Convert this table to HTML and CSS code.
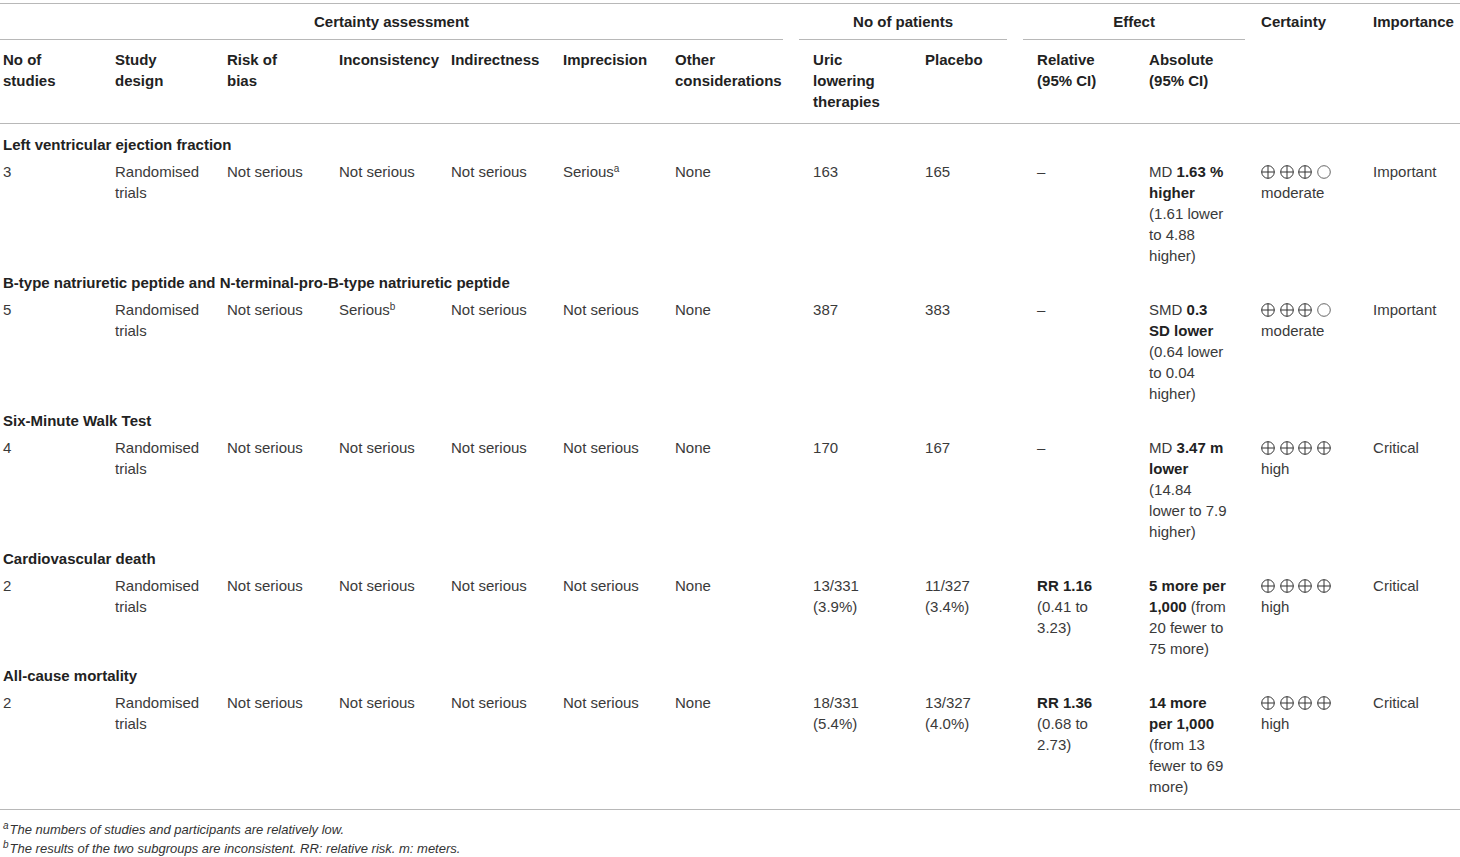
FILE: index.html
```html
<!DOCTYPE html>
<html lang="en">
<head>
  <meta charset="UTF-8" />
  <meta name="viewport" content="width=device-width, initial-scale=1.0"/>
  <title>GRADE evidence profile</title>
  <link rel="stylesheet" href="styles.css">
</head>
<body>
  <div class="table-wrap">
    <table class="grade">
      <colgroup>
        <col class="w112"><col class="w112"><col class="w112"><col class="w112"><col class="w112"><col class="w112">
        <col class="w138">
        <col class="w112"><col class="w112"><col class="w112"><col class="w112"><col class="w112">
        <col class="w90">
      </colgroup>
      <thead>
        <tr class="groups">
          <th colspan="7"><div class="group g-assess">Certainty assessment</div></th>
          <th colspan="2"><div class="group g-patients">No of patients</div></th>
          <th colspan="2"><div class="group g-effect">Effect</div></th>
          <th rowspan="2" class="solo">Certainty</th>
          <th rowspan="2" class="solo">Importance</th>
        </tr>
        <tr class="cols">
          <th>No of<br>studies</th>
          <th>Study<br>design</th>
          <th>Risk of<br>bias</th>
          <th>Inconsistency</th>
          <th>Indirectness</th>
          <th>Imprecision</th>
          <th>Other<br>considerations</th>
          <th>Uric<br>lowering<br>therapies</th>
          <th>Placebo</th>
          <th>Relative<br>(95% CI)</th>
          <th>Absolute<br>(95% CI)</th>
        </tr>
      </thead>
      <tbody>
        <tr class="section first">
          <td colspan="13">Left ventricular ejection fraction</td>
        </tr>
        <tr>
          <td>3</td>
          <td>Randomised<br>trials</td>
          <td>Not serious</td>
          <td>Not serious</td>
          <td>Not serious</td>
          <td>Serious<sup>a</sup></td>
          <td>None</td>
          <td>163</td>
          <td>165</td>
          <td>–</td>
          <td>MD <b>1.63 %<br>higher</b><br>(1.61 lower<br>to 4.88<br>higher)</td>
          <td>
            <div class="dots">
              <svg viewBox="0 0 14 14"><circle cx="7" cy="7" r="6.3"/><path d="M0.7 7h12.6M7 0.7v12.6"/></svg>
              <svg viewBox="0 0 14 14"><circle cx="7" cy="7" r="6.3"/><path d="M0.7 7h12.6M7 0.7v12.6"/></svg>
              <svg viewBox="0 0 14 14"><circle cx="7" cy="7" r="6.3"/><path d="M0.7 7h12.6M7 0.7v12.6"/></svg>
              <svg class="empty" viewBox="0 0 14 14"><circle cx="7" cy="7" r="6.3"/></svg>
            </div>
            moderate
          </td>
          <td>Important</td>
        </tr>

        <tr class="section">
          <td colspan="13">B-type natriuretic peptide and N-terminal-pro-B-type natriuretic peptide</td>
        </tr>
        <tr>
          <td>5</td>
          <td>Randomised<br>trials</td>
          <td>Not serious</td>
          <td>Serious<sup>b</sup></td>
          <td>Not serious</td>
          <td>Not serious</td>
          <td>None</td>
          <td>387</td>
          <td>383</td>
          <td>–</td>
          <td>SMD <b>0.3<br>SD lower</b><br>(0.64 lower<br>to 0.04<br>higher)</td>
          <td>
            <div class="dots">
              <svg viewBox="0 0 14 14"><circle cx="7" cy="7" r="6.3"/><path d="M0.7 7h12.6M7 0.7v12.6"/></svg>
              <svg viewBox="0 0 14 14"><circle cx="7" cy="7" r="6.3"/><path d="M0.7 7h12.6M7 0.7v12.6"/></svg>
              <svg viewBox="0 0 14 14"><circle cx="7" cy="7" r="6.3"/><path d="M0.7 7h12.6M7 0.7v12.6"/></svg>
              <svg class="empty" viewBox="0 0 14 14"><circle cx="7" cy="7" r="6.3"/></svg>
            </div>
            moderate
          </td>
          <td>Important</td>
        </tr>

        <tr class="section">
          <td colspan="13">Six-Minute Walk Test</td>
        </tr>
        <tr>
          <td>4</td>
          <td>Randomised<br>trials</td>
          <td>Not serious</td>
          <td>Not serious</td>
          <td>Not serious</td>
          <td>Not serious</td>
          <td>None</td>
          <td>170</td>
          <td>167</td>
          <td>–</td>
          <td>MD <b>3.47 m<br>lower</b><br>(14.84<br>lower to 7.9<br>higher)</td>
          <td>
            <div class="dots">
              <svg viewBox="0 0 14 14"><circle cx="7" cy="7" r="6.3"/><path d="M0.7 7h12.6M7 0.7v12.6"/></svg>
              <svg viewBox="0 0 14 14"><circle cx="7" cy="7" r="6.3"/><path d="M0.7 7h12.6M7 0.7v12.6"/></svg>
              <svg viewBox="0 0 14 14"><circle cx="7" cy="7" r="6.3"/><path d="M0.7 7h12.6M7 0.7v12.6"/></svg>
              <svg viewBox="0 0 14 14"><circle cx="7" cy="7" r="6.3"/><path d="M0.7 7h12.6M7 0.7v12.6"/></svg>
            </div>
            high
          </td>
          <td>Critical</td>
        </tr>

        <tr class="section">
          <td colspan="13">Cardiovascular death</td>
        </tr>
        <tr>
          <td>2</td>
          <td>Randomised<br>trials</td>
          <td>Not serious</td>
          <td>Not serious</td>
          <td>Not serious</td>
          <td>Not serious</td>
          <td>None</td>
          <td>13/331<br>(3.9%)</td>
          <td>11/327<br>(3.4%)</td>
          <td><b>RR 1.16</b><br>(0.41 to<br>3.23)</td>
          <td><b>5 more per<br>1,000</b> (from<br>20 fewer to<br>75 more)</td>
          <td>
            <div class="dots">
              <svg viewBox="0 0 14 14"><circle cx="7" cy="7" r="6.3"/><path d="M0.7 7h12.6M7 0.7v12.6"/></svg>
              <svg viewBox="0 0 14 14"><circle cx="7" cy="7" r="6.3"/><path d="M0.7 7h12.6M7 0.7v12.6"/></svg>
              <svg viewBox="0 0 14 14"><circle cx="7" cy="7" r="6.3"/><path d="M0.7 7h12.6M7 0.7v12.6"/></svg>
              <svg viewBox="0 0 14 14"><circle cx="7" cy="7" r="6.3"/><path d="M0.7 7h12.6M7 0.7v12.6"/></svg>
            </div>
            high
          </td>
          <td>Critical</td>
        </tr>

        <tr class="section">
          <td colspan="13">All-cause mortality</td>
        </tr>
        <tr class="last">
          <td>2</td>
          <td>Randomised<br>trials</td>
          <td>Not serious</td>
          <td>Not serious</td>
          <td>Not serious</td>
          <td>Not serious</td>
          <td>None</td>
          <td>18/331<br>(5.4%)</td>
          <td>13/327<br>(4.0%)</td>
          <td><b>RR 1.36</b><br>(0.68 to<br>2.73)</td>
          <td><b>14 more<br>per 1,000</b><br>(from 13<br>fewer to 69<br>more)</td>
          <td>
            <div class="dots">
              <svg viewBox="0 0 14 14"><circle cx="7" cy="7" r="6.3"/><path d="M0.7 7h12.6M7 0.7v12.6"/></svg>
              <svg viewBox="0 0 14 14"><circle cx="7" cy="7" r="6.3"/><path d="M0.7 7h12.6M7 0.7v12.6"/></svg>
              <svg viewBox="0 0 14 14"><circle cx="7" cy="7" r="6.3"/><path d="M0.7 7h12.6M7 0.7v12.6"/></svg>
              <svg viewBox="0 0 14 14"><circle cx="7" cy="7" r="6.3"/><path d="M0.7 7h12.6M7 0.7v12.6"/></svg>
            </div>
            high
          </td>
          <td>Critical</td>
        </tr>
      </tbody>
    </table>

    <div class="notes">
      <p><sup>a</sup>The numbers of studies and participants are relatively low.</p>
      <p><sup>b</sup>The results of the two subgroups are inconsistent. RR: relative risk. m: meters.</p>
    </div>
  </div>
</body>
</html>
```

FILE: styles.css
```css
body {
  margin: 0;
  background-color: #fff;
  font-family: "Liberation Sans", Arial, sans-serif;
  font-size: 15px;
  color: #3a3a3a;
}

.table-wrap {
  width: 1460px;
  padding-top: 3px;
}

.grade {
  width: 1460px;
  table-layout: fixed;
  border-collapse: collapse;
  border-top: 1px solid #b8b8b8;
  border-bottom: 1px solid #b8b8b8;
  line-height: 21px;
}

.w112 { width: 112px; }
.w138 { width: 138px; }
.w90 { width: 90px; }

th {
  font-weight: bold;
  color: #222;
  text-align: left;
  vertical-align: top;
}

.groups th {
  padding: 0;
}

.group {
  text-align: center;
  padding: 7px 0;
  border-bottom: 1px solid #b8b8b8;
}

.g-assess { margin: 0 27px 0 0; }
.g-patients { margin: 0 27px 0 -11px; }
.g-effect { margin: 0 13px 0 -11px; }

.groups th.solo {
  padding: 7px 3px 0;
  border-bottom: 1px solid #b8b8b8;
}

.cols th {
  padding: 9px 3px 11px;
  border-bottom: 1px solid #b8b8b8;
}

td {
  padding: 3px 3px;
  vertical-align: top;
}

.section td {
  font-weight: bold;
  color: #222;
}

.section.first td {
  padding-top: 10px;
}

.last td {
  padding-bottom: 12px;
}

b {
  color: #222;
}

sup {
  font-size: 10px;
  line-height: 0;
  vertical-align: 5px;
}

.dots {
  display: flex;
  align-items: center;
  gap: 4.5px;
  height: 21px;
}

.dots svg {
  width: 14px;
  height: 14px;
  fill: none;
  stroke: #333;
  stroke-width: 1;
}

.dots svg.empty {
  stroke: #666;
}

.notes {
  margin-top: 10px;
  padding-left: 3px;
  font-size: 13px;
  font-style: italic;
  line-height: 19px;
  color: #333;
}

.notes p {
  margin: 0;
}

.notes sup {
  font-size: 10px;
  vertical-align: 5px;
  margin-right: 1px;
}
```
